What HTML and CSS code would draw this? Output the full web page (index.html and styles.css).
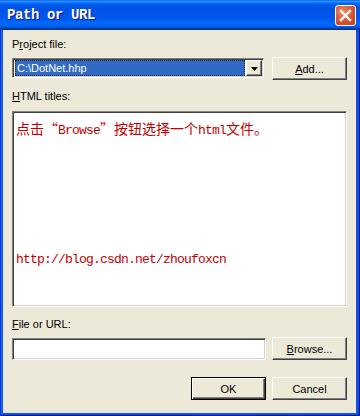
FILE: index.html
```html
<!DOCTYPE html>
<html>
<head>
<meta charset="utf-8">
<title>Path or URL</title>
<link rel="stylesheet" href="styles.css">
</head>
<body>
<div class="window">
  <div class="titlebar">
    <span class="title">Path or URL</span>
    <span class="close">
      <svg width="13" height="13" viewBox="0 0 13 13"><path d="M2 2 L11 11 M11 2 L2 11" stroke="#fff" stroke-width="2.4" stroke-linecap="square"/></svg>
    </span>
  </div>
  <div class="client">
    <div class="label l1">P<u>r</u>oject file:</div>
    <div class="row r1">
      <div class="combo">
        <div class="combo-value"><span class="sel">C:\DotNet.hhp</span></div>
        <div class="drop"><svg width="7" height="4" viewBox="0 0 7 4"><path d="M0 0 H7 L3.5 4 Z" fill="#000"/></svg></div>
      </div>
      <button class="btn"><u>A</u>dd...</button>
    </div>
    <div class="label l2"><u>H</u>TML titles:</div>
    <div class="titles">
      <p class="line1"><span class="zh">点击“</span><span class="lat">Browse</span><span class="zh">”按钮选择一个</span><span class="lat">html</span><span class="zh">文件。</span></p>
      <p class="line2"><span class="lat">http://blog.csdn.net/zhoufoxcn</span></p>
    </div>
    <div class="label l3"><u>F</u>ile or URL:</div>
    <div class="row r3">
      <div class="field"></div>
      <button class="btn"><u>B</u>rowse...</button>
    </div>
    <div class="row actions">
      <button class="btn default">OK</button>
      <button class="btn">Cancel</button>
    </div>
  </div>
</div>
</body>
</html>
```
FILE: styles.css
```css
html, body {
  margin: 0;
  padding: 0;
}
body {
  width: 360px;
  height: 416px;
  overflow: hidden;
  font-family: "Liberation Sans", Arial, sans-serif;
  font-size: 11px;
  color: #000;
}
.window {
  width: 360px;
  height: 416px;
  display: flex;
  flex-direction: column;
  background: #0a56e2;
  box-shadow: inset 1px 0 #0831d9, inset -1px 0 #00138c, inset 0 -1px #00138c, inset 2px 0 #166aee, inset -2px 0 #0a48cf;
}
.titlebar {
  height: 30px;
  flex: none;
  display: flex;
  align-items: center;
  padding-left: 7px;
  background: linear-gradient(to bottom, #0058ee 0%, #3593ff 4%, #288eff 6%, #127dff 8%, #036ffc 10%, #0262ee 14%, #0057e5 20%, #0054e3 24%, #0055eb 56%, #005bf5 66%, #026afe 76%, #0062ef 86%, #0052d6 92%, #0040ab 94%, #003092 100%);
}
.title {
  font-family: "Liberation Mono", monospace;
  font-weight: bold;
  font-size: 14px;
  letter-spacing: -0.4px;
  line-height: 15px;
  color: #fff;
  text-shadow: 1px 1px #0f1089;
}
.close {
  margin-left: auto;
  margin-right: 4px;
  align-self: flex-start;
  margin-top: 5px;
  width: 21px;
  height: 21px;
  box-sizing: border-box;
  border: 1px solid #fff;
  border-radius: 3px;
  background: radial-gradient(circle at 35% 30%, #ec8a6a 0%, #dd5a38 45%, #c33a18 100%);
  display: flex;
  align-items: center;
  justify-content: center;
}
.client {
  flex: 1;
  margin: 0 4px 3px 3px;
  background: #ece9d8;
  padding: 8px 9px 0 9px;
  display: flex;
  flex-direction: column;
}
.label {
  line-height: 13px;
  height: 13px;
  white-space: nowrap;
}
.row {
  display: flex;
  align-items: flex-start;
  height: 23px;
}
.r1 {
  margin-top: 6px;
  gap: 8px;
}
.l2 {
  margin-top: 10px;
}
.l3 {
  margin-top: 11px;
}
.r3 {
  margin-top: 6px;
  gap: 6px;
}
.actions {
  margin-top: 17px;
  gap: 6px;
  justify-content: flex-end;
}
.combo, .field, .titles {
  box-sizing: border-box;
  border: 1px solid;
  border-color: #808080 #ffffff #ffffff #808080;
  box-shadow: inset 1px 1px #404040, inset -1px -1px #d4d0c8;
  background: #fff;
}
.combo {
  width: 252px;
  height: 20px;
  margin-top: 1px;
  padding: 1px 1px 1px 2px;
  display: flex;
}
.combo-value {
  flex: 1;
  padding: 0 1px 0 0;
  display: flex;
}
.sel {
  flex: 1;
  box-sizing: border-box;
  background: #316ac5;
  color: #fff;
  border: 1px dotted #2b2b1f;
  line-height: 14px;
  padding-left: 1px;
  white-space: nowrap;
}
.drop {
  width: 16px;
  height: 16px;
  box-sizing: border-box;
  background: #ece9d8;
  border: 1px solid;
  border-color: #ffffff #404040 #404040 #ffffff;
  box-shadow: inset -1px -1px #808080;
  display: flex;
  align-items: center;
  justify-content: center;
  padding-top: 1px;
}
.btn {
  width: 75px;
  height: 23px;
  box-sizing: border-box;
  margin: 0;
  padding: 0;
  font-family: "Liberation Sans", Arial, sans-serif;
  font-size: 11px;
  color: #000;
  background: #ece9d8;
  border: 1px solid;
  border-color: #ffffff #404040 #404040 #ffffff;
  box-shadow: inset -1px -1px #808080;
  flex: none;
}
.btn.default {
  border: 1px solid #000;
  box-shadow: inset 1px 1px #fff, inset -1px -1px #404040, inset -2px -2px #808080;
}
.titles {
  margin-top: 8px;
  height: 196px;
  padding: 8px 3px 0 3px;
  color: #c00000;
}
.titles p {
  margin: 0;
  line-height: 16px;
  white-space: nowrap;
}
.line2 {
  margin-top: 112px !important;
}
.zh {
  font-family: "Noto Sans CJK SC", sans-serif;
  font-size: 14px;
}
.lat {
  font-family: "Liberation Mono", monospace;
  font-size: 13px;
  letter-spacing: -0.8px;
}
.field {
  width: 254px;
  height: 22px;
  margin-top: 1px;
}
```
